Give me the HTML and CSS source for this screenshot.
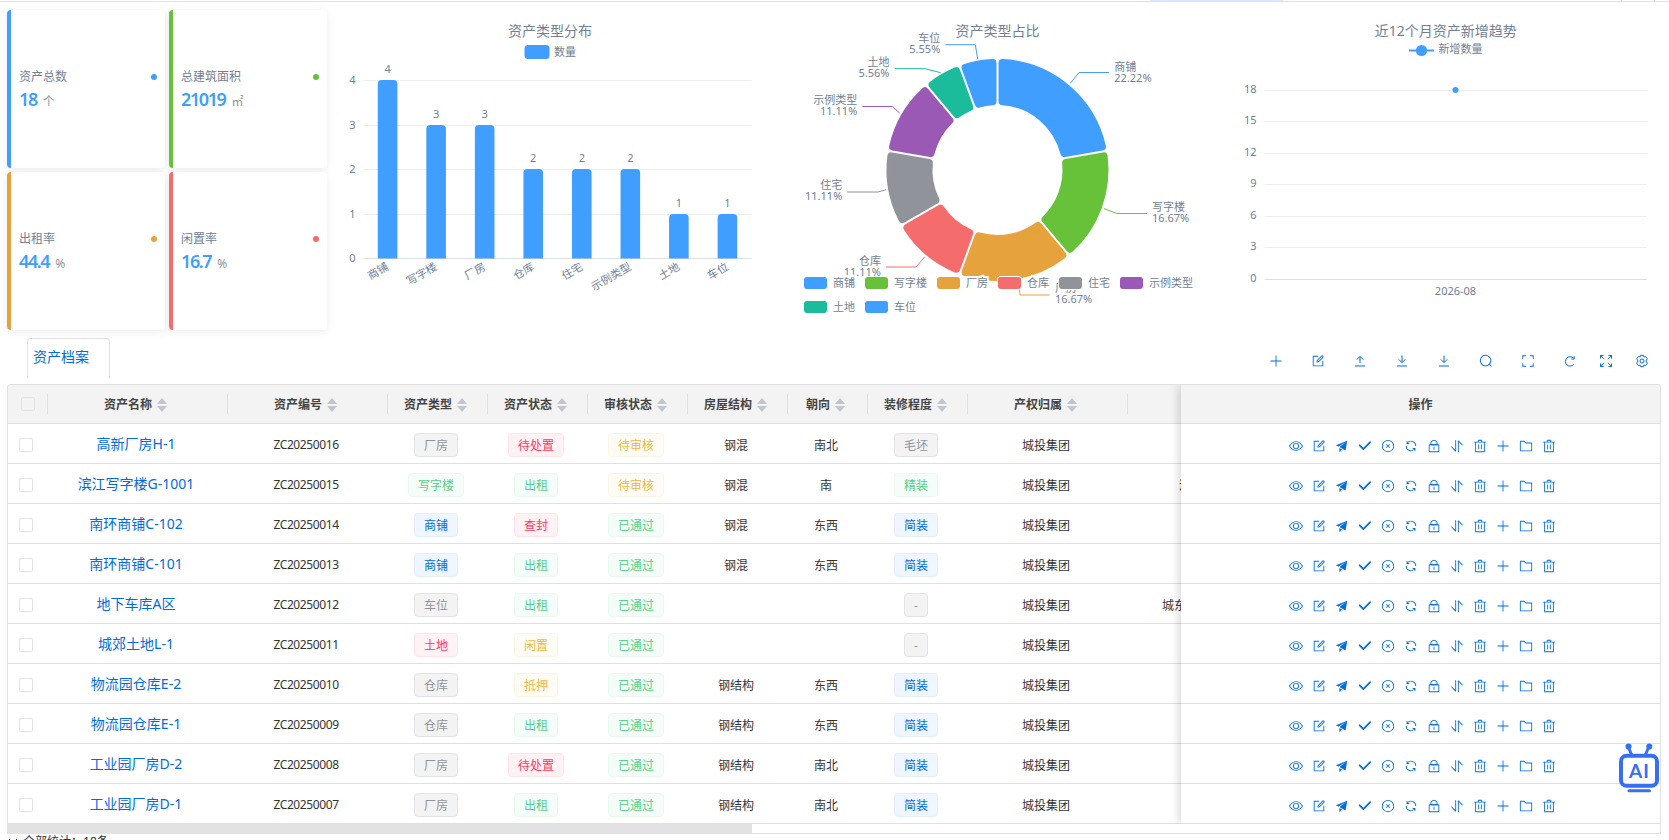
FILE: index.html
```
<!DOCTYPE html>
<html lang="zh-CN">
<head>
    <meta charset="UTF-8">
    <meta name="viewport" content="width=device-width, initial-scale=1.0">
    <title>资产档案</title>
    <link rel="stylesheet" href="styles.css">
</head>
<body>
    <!-- icon set -->
    <svg class="sprite">
        <symbol id="i-plus" viewBox="0 0 1024 1024"><path d="M480 480V128a32 32 0 0 1 64 0v352h352a32 32 0 1 1 0 64H544v352a32 32 0 1 1-64 0V544H128a32 32 0 0 1 0-64h352z"/></symbol>
        <symbol id="i-edit" viewBox="0 0 1024 1024"><path d="M832 512a32 32 0 1 1 64 0v352a32 32 0 0 1-32 32H160a32 32 0 0 1-32-32V160a32 32 0 0 1 32-32h352a32 32 0 0 1 0 64H192v640h640V512z"/><path d="m469.952 554.24 52.8-7.552L847.104 222.4a32 32 0 1 0-45.248-45.248L477.44 501.44l-7.552 52.8zm422.4-422.4a96 96 0 0 1 0 135.808l-331.84 331.84a32 32 0 0 1-18.112 9.088L436.8 623.68a32 32 0 0 1-36.224-36.224l15.104-105.6a32 32 0 0 1 9.024-18.112l331.904-331.84a96 96 0 0 1 135.744 0z"/></symbol>
        <symbol id="i-upload" viewBox="0 0 14 14"><path class="line" d="M2 12h10M7 9V2.5M3.8 5.6 7 2.4l3.2 3.2"/></symbol>
        <symbol id="i-download" viewBox="0 0 14 14"><path class="line" d="M2 12h10M7 1.5V8.5M3.8 5.4 7 8.6l3.2-3.2"/></symbol>
        <symbol id="i-search" viewBox="0 0 1024 1024"><path d="m795.904 750.72 124.992 124.928a32 32 0 0 1-45.248 45.248L750.656 795.904a416 416 0 1 1 45.248-45.248zM480 832a352 352 0 1 0 0-704 352 352 0 0 0 0 704z"/></symbol>
        <symbol id="i-full" viewBox="0 0 1024 1024"><path d="m160 96.064 192 .192a32 32 0 0 1 0 64l-192-.192V352a32 32 0 0 1-64 0V96h64v.064zm0 831.872V928H96V672a32 32 0 1 1 64 0v191.936l192-.192a32 32 0 1 1 0 64l-192 .192zM864 96.064V96h64v256a32 32 0 1 1-64 0V160.064l-192 .192a32 32 0 1 1 0-64l192-.192zm0 831.872-192-.192a32 32 0 0 1 0-64l192 .192V672a32 32 0 1 1 64 0v256h-64v-.064z"/></symbol>
        <symbol id="i-reload" viewBox="0 0 14 14"><path class="line" d="M10.8 10.4A4.7 4.7 0 1 1 10.6 4.2M11.2 2.2v2.8H8.2"/></symbol>
        <symbol id="i-expand" viewBox="0 0 14 14"><path class="line" d="M1.5 4.5v-3h3M1.8 1.8 5.2 5.2M9.5 1.5h3v3M12.2 1.8 8.8 5.2M1.5 9.5v3h3M1.8 12.2 5.2 8.8M12.5 9.5v3h-3M12.2 12.2 8.8 8.8"/></symbol>
        <symbol id="i-setting" viewBox="0 0 14 14"><path class="line" d="M5.6 1.3h2.8l.5 1.6 1.6-.4 1.9 2.3-1.1 1.3v1.8l1.1 1.3-1.9 2.3-1.6-.4-.5 1.6H5.6l-.5-1.6-1.6.4-1.9-2.3 1.1-1.3V6.1L1.6 4.8l1.9-2.3 1.6.4z"/><circle class="line" cx="7" cy="7" r="2"/></symbol>
        <symbol id="i-view" viewBox="0 0 1024 1024"><path d="M512 160c320 0 512 352 512 352S832 864 512 864 0 512 0 512s192-352 512-352zm0 64c-225.28 0-384.128 208.064-436.8 288 52.608 79.872 211.456 288 436.8 288 225.28 0 384.128-208.064 436.8-288-52.608-79.872-211.456-288-436.8-288zm0 64a224 224 0 1 1 0 448 224 224 0 0 1 0-448zm0 64a160.192 160.192 0 0 0-160 160c0 88.192 71.744 160 160 160s160-71.808 160-160-71.744-160-160-160z"/></symbol>
        <symbol id="i-send" viewBox="0 0 1024 1024"><path d="m64 448 832-320-128 704-446.08-243.328L832 192 242.816 545.536 64 448zm256 512V657.024L512 768 320 960z"/></symbol>
        <symbol id="i-check" viewBox="0 0 1024 1024"><path d="M77.248 415.04a64 64 0 0 1 90.496 0l226.304 226.304L846.528 188.8a64 64 0 1 1 90.56 90.496l-543.04 543.04-316.8-316.8a64 64 0 0 1 0-90.496z"/></symbol>
        <symbol id="i-close" viewBox="0 0 1024 1024"><path d="m466.752 512-90.496-90.496a32 32 0 0 1 45.248-45.248L512 466.752l90.496-90.496a32 32 0 0 1 45.248 45.248L557.248 512l90.496 90.496a32 32 0 1 1-45.248 45.248L512 557.248l-90.496 90.496a32 32 0 0 1-45.248-45.248L466.752 512z"/><path d="M512 896a384 384 0 1 0 0-768 384 384 0 0 0 0 768zm0 64a448 448 0 1 1 0-896 448 448 0 0 1 0 896z"/></symbol>
        <symbol id="i-refresh" viewBox="0 0 1024 1024"><path d="M771.776 794.88A384 384 0 0 1 128 512h64a320 320 0 0 0 555.712 216.448H654.72a32 32 0 1 1 0-64h149.056a32 32 0 0 1 32 32v148.928a32 32 0 1 1-64 0v-50.56zM276.288 295.616h92.992a32 32 0 0 1 0 64H220.16a32 32 0 0 1-32-32V178.56a32 32 0 0 1 64 0v50.56A384 384 0 0 1 896.128 512h-64a320 320 0 0 0-555.776-216.384z"/></symbol>
        <symbol id="i-lock" viewBox="0 0 1024 1024"><path d="M224 448a32 32 0 0 0-32 32v384a32 32 0 0 0 32 32h576a32 32 0 0 0 32-32V480a32 32 0 0 0-32-32H224zm0-64h576a96 96 0 0 1 96 96v384a96 96 0 0 1-96 96H224a96 96 0 0 1-96-96V480a96 96 0 0 1 96-96z"/><path d="M512 544a32 32 0 0 1 32 32v192a32 32 0 1 1-64 0V576a32 32 0 0 1 32-32zm192-160v-64a192 192 0 1 0-384 0v64h384zM512 64a256 256 0 0 1 256 256v128H256V320A256 256 0 0 1 512 64z"/></symbol>
        <symbol id="i-sort" viewBox="0 0 1024 1024"><path d="M384 96a32 32 0 0 1 64 0v786.752a32 32 0 0 1-54.592 22.656L95.936 608a32 32 0 0 1 0-45.312h.128a32 32 0 0 1 45.184 0L384 805.632V96zm192 45.248a32 32 0 0 1 54.592-22.592L928.064 416a32 32 0 0 1 0 45.312h-.128a32 32 0 0 1-45.184 0L640 218.496V928a32 32 0 1 1-64 0V141.248z"/></symbol>
        <symbol id="i-delete" viewBox="0 0 1024 1024"><path d="M160 256H96a32 32 0 0 1 0-64h256V95.936a32 32 0 0 1 32-32h256a32 32 0 0 1 32 32V192h256a32 32 0 1 1 0 64h-64v672a32 32 0 0 1-32 32H192a32 32 0 0 1-32-32V256zm448-64v-64H416v64h192zM224 896h576V256H224v640zm192-128a32 32 0 0 1-32-32V416a32 32 0 0 1 64 0v320a32 32 0 0 1-32 32zm192 0a32 32 0 0 1-32-32V416a32 32 0 0 1 64 0v320a32 32 0 0 1-32 32z"/></symbol>
        <symbol id="i-folder" viewBox="0 0 1024 1024"><path d="M128 192v640h768V320H485.76L357.504 192H128zm-32-64h287.872l128.384 128H928a32 32 0 0 1 32 32v576a32 32 0 0 1-32 32H96a32 32 0 0 1-32-32V160a32 32 0 0 1 32-32z"/></symbol>
    </svg>

    <div class="top-strip">
        <span class="strip-active"></span>
        <span class="strip-tick"></span>
    </div>

    <div class="dashboard">
        <div class="stat-cards">
            <div class="stat-card blue">
                <div class="stat-label">资产总数<i></i></div>
                <div class="stat-value">18<small>个</small></div>
            </div>
            <div class="stat-card green">
                <div class="stat-label">总建筑面积<i></i></div>
                <div class="stat-value">21019<small>㎡</small></div>
            </div>
            <div class="stat-card orange">
                <div class="stat-label">出租率<i></i></div>
                <div class="stat-value">44.4<small>%</small></div>
            </div>
            <div class="stat-card red">
                <div class="stat-label">闲置率<i></i></div>
                <div class="stat-value">16.7<small>%</small></div>
            </div>
        </div>
        <svg class="chart" id="barChart" viewBox="327 10 447 320"></svg>
        <svg class="chart" id="pieChart" viewBox="774 10 447 320"></svg>
        <svg class="chart" id="lineChart" viewBox="1221 10 447 320"></svg>
    </div>

    <div class="tab-row">
        <div class="tab">资产档案</div>
        <div class="toolbar">
            <svg><use href="#i-plus"/></svg>
            <svg><use href="#i-edit"/></svg>
            <svg><use href="#i-upload"/></svg>
            <svg><use href="#i-download"/></svg>
            <svg><use href="#i-download"/></svg>
            <svg><use href="#i-search"/></svg>
            <svg><use href="#i-full"/></svg>
            <svg><use href="#i-reload"/></svg>
            <svg class="tight"><use href="#i-expand"/></svg>
            <svg class="tight"><use href="#i-setting"/></svg>
        </div>
    </div>

    <div class="table">
        <div class="table-main" id="tableMain"></div>
        <div class="table-fixed" id="tableFixed"></div>
    </div>
    <div class="scroll-track"><div class="scroll-thumb"></div></div>
    <div class="summary">
        <svg viewBox="0 0 10 10"><path d="M1 2l4 4 4-4"/></svg>
        <span>全部统计：</span><span>18条</span>
    </div>

    <svg class="ai-bot" viewBox="0 0 42 52">
        <path d="M10 3.5l3.5 8M31 3.5l-3.5 8" stroke-width="3"/>
        <circle cx="10.5" cy="3.6" r="3"/>
        <circle cx="31.3" cy="3.6" r="3"/>
        <rect x="3" y="12.7" width="36" height="30" rx="5.5"/>
        <path d="M11 47.7h20.500" stroke-width="3"/>
        <text x="21.500" y="34.500">AI</text>
    </svg>

    <script src="script.js"></script>
</body>
</html>
```
FILE: styles.css
```
* {
    box-sizing: border-box;
}

body {
    margin: 0;
    height: 840px;
    overflow: hidden;
    background: #fff;
    color: #333;
    font-family: "Noto Sans", "Noto Sans CJK SC", sans-serif;
    font-size: 12px;
}

.sprite {
    display: none;
}

svg {
    fill: currentColor;
}

.line {
    fill: none;
    stroke: currentColor;
    stroke-width: 1;
}

/* bottom edge of the page tabs */
.top-strip {
    height: 2px;
    border-bottom: 1px solid #e0e0e0;
    display: flex;
    padding-left: 1150px;
}

.strip-active {
    width: 133px;
    height: 1px;
    background: #d9e8ff;
}

.strip-tick {
    width: 34px;
    height: 1px;
    margin-left: 338px;
    border-left: 1px solid #dcdcdc;
    border-right: 1px solid #dcdcdc;
}

.dashboard {
    display: flex;
    height: 336px;
    padding: 8px 0 0 7px;
}

/* stat cards */
.stat-cards {
    display: grid;
    grid-template-columns: 158px 158px;
    grid-template-rows: 158px 158px;
    gap: 4px;
    width: 320px;
}

.stat-card {
    border-left: 4px solid;
    border-radius: 4px;
    background: #fff;
    box-shadow: 0 2px 8px rgba(0, 0, 0, 0.08);
    padding: 3px 8px 0;
    display: flex;
    flex-direction: column;
    justify-content: center;
}

.stat-label {
    display: flex;
    justify-content: space-between;
    align-items: center;
    color: #718096;
    line-height: 18px;
    margin-bottom: 1px;
}

.stat-label i {
    width: 6px;
    height: 6px;
    border-radius: 50%;
}

.stat-value {
    color: #409eff;
    font-size: 18px;
    font-weight: 600;
    line-height: 24px;
    letter-spacing: -1.4px;
}

.stat-value small {
    margin-left: 6px;
    font-size: 12px;
    font-weight: 400;
    letter-spacing: 0;
    color: #909399;
}

.blue { border-color: #409eff; }
.green { border-color: #67c23a; }
.orange { border-color: #e6a23c; }
.red { border-color: #f56c6c; }
.blue i { background: #409eff; }
.green i { background: #67c23a; }
.orange i { background: #e6a23c; }
.red i { background: #f56c6c; }

/* charts */
.chart {
    width: 447px;
    height: 320px;
    flex: none;
}

.chart text {
    font-size: 11px;
    fill: #718096;
    dominant-baseline: central;
}

.chart .title {
    font-size: 14px;
    text-anchor: middle;
}

.chart .mid { text-anchor: middle; }
.chart .end { text-anchor: end; }

.chart .legend {
    paint-order: stroke;
    stroke: #fff;
    stroke-width: 4px;
}

.chart .grid { stroke: #eceef0; }
.chart .axis { stroke: #dcdfe6; }

/* tab + toolbar */
.tab-row {
    display: flex;
    justify-content: space-between;
    height: 46px;
    padding-left: 27px;
}

.tab {
    width: 83px;
    height: 40px;
    padding-left: 5px;
    border: 1px solid #e0e0e0;
    border-bottom: none;
    border-radius: 4px 4px 0 0;
    color: #006be6;
    font-size: 14px;
    line-height: 36px;
}

.toolbar {
    display: flex;
    gap: 28px;
    padding: 16px 20px 0 0;
    color: #006be6;
}

.toolbar svg {
    width: 14px;
    height: 14px;
}

.toolbar .tight {
    margin-left: -6px;
}

/* table */
.table {
    display: flex;
    width: 1654px;
    height: 440px;
    margin-left: 7px;
    border: 1px solid #e0e0e0;
    border-bottom: none;
    border-radius: 4px 4px 0 0;
    overflow: hidden;
}

.table-main {
    width: 1173px;
    overflow: hidden;
}

.table-fixed {
    width: 479px;
    flex: none;
    z-index: 1;
    background: #fff;
    box-shadow: -1px 0 10px rgba(0, 0, 0, 0.2);
}

.head,
.row {
    display: grid;
    grid-template-columns: 40px 180px 160px 100px 100px 100px 100px 80px 100px 160px 160px;
    align-items: center;
    text-align: center;
    border-bottom: 1px solid #e0e0e0;
}

.head {
    height: 39px;
    background: #f3f3f3;
    font-weight: 700;
    color: #444;
}

.row {
    height: 40px;
    padding-top: 2px;
}

.table-main .row {
    margin-left: -3px;
    padding-left: 1px;
}

.head > div {
    display: flex;
    align-items: center;
    justify-content: center;
    height: 20px;
    border-right: 1px solid #dfe0e2;
}

.table-fixed .head,
.table-fixed .row {
    display: flex;
    justify-content: center;
}

.sort {
    display: flex;
    flex-direction: column;
    gap: 2px;
    margin: 2px 4px 0 5px;
}

.sort::before,
.sort::after {
    content: "";
    border: 5px solid transparent;
}

.sort::before {
    border-top: none;
    border-bottom: 6px solid #c0c4cc;
}

.sort::after {
    border-bottom: none;
    border-top: 6px solid #c0c4cc;
}

.check {
    width: 14px;
    height: 14px;
    margin: 0 auto;
    border: 1px solid #e0e2e8;
    border-radius: 2px;
}

.code {
    letter-spacing: -0.4px;
}

.name {
    color: #006be6;
    font-size: 14px;
    line-height: 20px;
    padding-bottom: 2px;
}

.tag {
    display: inline-block;
    height: 24px;
    padding: 0 9px;
    border: 1px solid;
    border-radius: 4px;
    line-height: 23px;
}

.tag.info { color: #909399; background: #f3f3f4; border-color: #e2e3e5; }
.tag.success { color: #57d188; background: #f5fdf8; border-color: #e9f9ef; }
.tag.warning { color: #f0b83c; background: #fffcf5; border-color: #fdf5e4; }
.tag.danger { color: #ff3860; background: #fff2f4; border-color: #ffe3e8; }
.tag.primary { color: #006be6; background: #f0f6ff; border-color: #e0eeff; }

.address {
    text-align: left;
    white-space: nowrap;
}

.actions {
    gap: 9px;
    color: #006be6;
    padding: 4px 0 0 3px;
}

.actions svg {
    width: 14px;
    height: 14px;
}

.scroll-track {
    width: 1654px;
    height: 10px;
    margin-left: 7px;
    border: 1px solid #e0e0e0;
    border-top: none;
}

.scroll-thumb {
    width: 744px;
    height: 10px;
    background: #e2e2e4;
}

.summary {
    display: flex;
    margin: -1px 0 0 8px;
    line-height: 18px;
}

.summary svg {
    width: 10px;
    height: 10px;
    margin: 4px 5px 0 0;
    fill: none;
    stroke: #444;
}

/* floating assistant */
.ai-bot {
    position: absolute;
    left: 1618px;
    top: 743px;
    z-index: 2;
    width: 42px;
    height: 52px;
    color: #366ef4;
    stroke-linecap: round;
}

.ai-bot path {
    fill: none;
    stroke: currentColor;
}

.ai-bot rect {
    fill: #fff;
    stroke: currentColor;
    stroke-width: 4px;
}

.ai-bot text {
    font-family: Lato, sans-serif;
    font-size: 19px;
    font-weight: 700;
    letter-spacing: 1px;
    text-anchor: middle;
}
```
FILE: script.js
```
const BLUE = '#409eff';
const types = [
    ['商铺', 4, '#409eff'], ['写字楼', 3, '#67c23a'], ['厂房', 3, '#e6a23c'], ['仓库', 2, '#f56c6c'],
    ['住宅', 2, '#909399'], ['示例类型', 2, '#9b59b6'], ['土地', 1, '#1abc9c'], ['车位', 1, '#409eff']
];

function text(x, y, str, cls) {
    return `<text x="${x}" y="${y}" class="${cls || ''}">${str}</text>`;
}

// bar chart
function drawBars() {
    const left = 363.3, right = 751.7, band = (right - left) / 8;
    const ys = [258.5, 214.5, 169.5, 125.5, 80.5];
    let s = text(550, 30, '资产类型分布', 'title');
    s += `<rect x="524.5" y="45" width="25" height="14" rx="3.5" fill="${BLUE}"/>` + text(554, 51, '数量');
    ys.forEach((y, i) => {
        s += `<line class="${i ? 'grid' : 'axis'}" x1="${left}" x2="${right}" y1="${y}" y2="${y}"/>`;
        s += text(355.5, y - 1.5, i, 'end');
    });
    types.forEach(([name, n], i) => {
        const cx = left + band * (i + 0.5), x = cx - 9.8, y = ys[n] - 0.5;
        s += `<path fill="${BLUE}" d="M${x} 258.5V${y + 4}q0-4 4-4h11.6q4 0 4 4V258.5z"/>`;
        s += text(cx, y - 11.5, n, 'mid');
        s += `<g transform="translate(${cx - 0.5} 265) rotate(-30)">${text(0, 0, name, 'end')}</g>`;
    });
    document.getElementById('barChart').innerHTML = s;
}

// ring slice with rounded corners: inset the outline, then stroke it back out
function slice(a0, a1, color) {
    const cx = 997.5, cy = 170, r = 4, gap = 1 + r;
    const R = 111 - r, q = 65 + r;
    const pt = (rad, a) => (cx + rad * Math.sin(a)).toFixed(2) + ' ' + (cy - rad * Math.cos(a)).toFixed(2);
    const o = Math.asin(gap / R), n = Math.asin(gap / q);
    return `<path fill="${color}" stroke="${color}" stroke-width="${2 * r}" stroke-linejoin="round" d="M${pt(R, a0 + o)}A${R} ${R} 0 0 1 ${pt(R, a1 - o)}L${pt(q, a1 - n)}A${q} ${q} 0 0 0 ${pt(q, a0 + n)}z"/>`;
}

function drawPie() {
    // [leader points, label x, label y, percent, align]
    const labels = [
        ['1070.3,83.3 1079,72.5 1109,72.5', 1114.3, 66, '22.22%', ''],
        ['1104,208.6 1117,213.5 1147,213.5', 1152, 206.5, '16.67%', ''],
        ['1018.5,281 1020,295 1049.5,295', 1055, 287, '16.67%', ''],
        ['924.7,257 916,267 886,267', 881, 260.5, '11.11%', 'end'],
        ['886,189.7 878,192 847,192', 842.3, 184.5, '11.11%', 'end'],
        ['899.7,113 892.3,106.5 862.3,106.5', 857.3, 99.5, '11.11%', 'end'],
        ['940.7,72.7 925,68.7 894.5,68.7', 889.5, 61.5, '5.56%', 'end'],
        ['977.7,59 975.3,44.7 945.5,44.7', 940.3, 37.5, '5.55%', 'end']
    ];
    let s = text(997.5, 30, '资产类型占比', 'title');
    let a = 0;
    types.forEach(([name, n, color], i) => {
        const b = a + n / 18 * Math.PI * 2;
        const [pts, x, y, pct, cls] = labels[i];
        s += slice(a, b, color);
        s += `<polyline points="${pts}" fill="none" stroke="${color}"/>`;
        s += text(x, y, name, cls) + text(x, y + 11, pct, cls);
        a = b;
    });
    const xs = [804, 865, 937, 998, 1059, 1120, 804, 865];
    types.forEach(([name, , color], i) => {
        const y = i < 6 ? 277 : 301;
        s += `<rect x="${xs[i] - 1}" y="${y - 1}" width="25" height="14" rx="4" fill="#fff"/>`;
        s += `<rect x="${xs[i]}" y="${y}" width="23" height="12" rx="3" fill="${color}"/>`;
        s += text(xs[i] + 29, y + 5, name, 'legend');
    });
    document.getElementById('pieChart').innerHTML = s;
}

// line chart
function drawLine() {
    let s = text(1445.7, 30, '近12个月资产新增趋势', 'title');
    s += `<line x1="1409" x2="1434" y1="50.5" y2="50.5" stroke="${BLUE}" stroke-width="2"/>`;
    s += `<circle cx="1421.5" cy="50.5" r="5.6" fill="${BLUE}"/>` + text(1438.5, 48.7, '新增数量');
    [279.5, 247.5, 216.5, 184.5, 153.5, 121.5, 90.5].forEach((y, i) => {
        s += `<line class="${i ? 'grid' : 'axis'}" x1="1264.5" x2="1646.7" y1="${y}" y2="${y}"/>`;
        s += text(1256.5, y - 2, i * 3, 'end');
    });
    s += `<circle cx="1455.5" cy="90" r="3" fill="${BLUE}"/>`;
    s += text(1455.5, 290.5, '2026-08', 'mid');
    document.getElementById('lineChart').innerHTML = s;
}

// table
const tagType = {
    '厂房': 'info', '仓库': 'info', '车位': 'info', '写字楼': 'success', '商铺': 'primary', '土地': 'danger',
    '待处置': 'danger', '查封': 'danger', '出租': 'success', '闲置': 'warning', '抵押': 'warning',
    '待审核': 'warning', '已通过': 'success', '毛坯': 'info', '精装': 'success', '简装': 'primary', '-': 'info'
};
const columns = ['资产名称', '资产编号', '资产类型', '资产状态', '审核状态', '房屋结构', '朝向', '装修程度', '产权归属'];
const rows = [
    ['高新厂房H-1', 'ZC20250016', '厂房', '待处置', '待审核', '钢混', '南北', '毛坯'],
    ['滨江写字楼G-1001', 'ZC20250015', '写字楼', '出租', '待审核', '钢混', '南', '精装'],
    ['南环商铺C-102', 'ZC20250014', '商铺', '查封', '已通过', '钢混', '东西', '简装'],
    ['南环商铺C-101', 'ZC20250013', '商铺', '出租', '已通过', '钢混', '东西', '简装'],
    ['地下车库A区', 'ZC20250012', '车位', '出租', '已通过', '', '', '-'],
    ['城郊土地L-1', 'ZC20250011', '土地', '闲置', '已通过', '', '', '-'],
    ['物流园仓库E-2', 'ZC20250010', '仓库', '抵押', '已通过', '钢结构', '东西', '简装'],
    ['物流园仓库E-1', 'ZC20250009', '仓库', '出租', '已通过', '钢结构', '东西', '简装'],
    ['工业园厂房D-2', 'ZC20250008', '厂房', '待处置', '已通过', '钢结构', '南北', '简装'],
    ['工业园厂房D-1', 'ZC20250007', '厂房', '出租', '已通过', '钢结构', '南北', '简装']
];
const address = { 1: ['滨', 53], 4: ['城东', 36] };
const actions = ['view', 'edit', 'send', 'check', 'close', 'refresh', 'lock', 'sort', 'delete', 'plus', 'folder', 'delete'];

function tag(v) {
    return `<div><span class="tag ${tagType[v]}">${v}</span></div>`;
}

function drawTable() {
    let main = '<div class="head"><div><span class="check"></span></div>';
    columns.forEach(c => main += `<div>${c}<span class="sort"></span></div>`);
    main += '<div></div></div>';
    let fixed = '<div class="head">操作</div>';
    const icons = actions.map(a => `<svg><use href="#i-${a}"/></svg>`).join('');

    rows.forEach((r, i) => {
        const [addr, pad] = address[i] || ['', 0];
        main += `<div class="row"><div><div class="check"></div></div>
            <div class="name">${r[0]}</div><div class="code">${r[1]}</div>
            ${tag(r[2])}${tag(r[3])}${tag(r[4])}
            <div>${r[5]}</div><div>${r[6]}</div>${tag(r[7])}<div>城投集团</div>
            <div class="address" style="padding-left:${pad}px">${addr}</div></div>`;
        fixed += `<div class="row actions">${icons}</div>`;
    });
    document.getElementById('tableMain').innerHTML = main;
    document.getElementById('tableFixed').innerHTML = fixed;
}

drawBars();
drawPie();
drawLine();
drawTable();
```
